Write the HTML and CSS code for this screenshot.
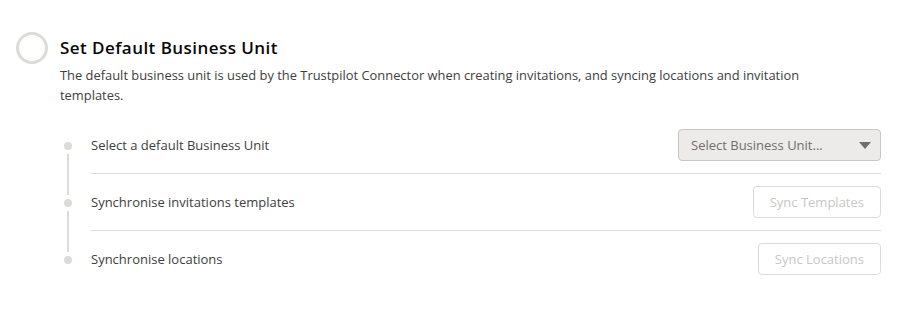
FILE: index.html
```html
<!DOCTYPE html>
<html>
<head>
<meta charset="utf-8">
<link rel="stylesheet" href="styles.css">
</head>
<body>
<div class="step">
  <div class="step-head">
    <span class="step-circle"></span>
    <h2 class="step-title">Set Default Business Unit</h2>
  </div>
  <p class="step-desc">The default business unit is used by the Trustpilot Connector when creating invitations, and syncing locations and invitation templates.</p>
  <ul class="tasks">
    <li class="task">
      <span class="task-dot"></span>
      <div class="task-body">
        <span class="task-label">Select a default Business Unit</span>
        <div class="select">
          <span class="select-text">Select Business Unit...</span>
          <span class="select-caret"></span>
        </div>
      </div>
    </li>
    <li class="task">
      <span class="task-dot"></span>
      <div class="task-body">
        <span class="task-label">Synchronise invitations templates</span>
        <button class="btn" disabled>Sync Templates</button>
      </div>
    </li>
    <li class="task last">
      <span class="task-dot"></span>
      <div class="task-body">
        <span class="task-label">Synchronise locations</span>
        <button class="btn" disabled>Sync Locations</button>
      </div>
    </li>
  </ul>
</div>
</body>
</html>
```

FILE: styles.css
```css
* { box-sizing: border-box; }
html, body { margin: 0; padding: 0; background: #fff; }
body {
  font-family: "Open Sans", "Liberation Sans", sans-serif;
  color: #3e3e3c;
}
.step {
  padding: 32px 16px 0 16px;
  width: 897px;
}
.step-head {
  display: flex;
  align-items: center;
  gap: 12px;
}
.step-circle {
  width: 32px;
  height: 32px;
  border-radius: 50%;
  border: 3px solid #dddbda;
  flex: none;
}
.step-title {
  margin: 0;
  font-size: 17px;
  font-weight: 600;
  letter-spacing: 0.45px;
  color: #080707;
  line-height: 22px;
}
.step-desc {
  margin: 1px 0 0 44px;
  font-size: 12.9px;
  line-height: 20px;
  width: 780px;
  color: #3e3e3c;
}
.tasks {
  list-style: none;
  margin: 25px 0 0 0;
  padding: 0 0 0 48px;
}
.task {
  display: flex;
  position: relative;
  height: 57px;
}
.task-dot {
  width: 8px;
  height: 8px;
  border-radius: 50%;
  background: #dddbda;
  flex: none;
  margin-top: 12px;
}
.task::before {
  content: "";
  position: absolute;
  left: 3px;
  top: 24px;
  width: 2px;
  height: 41px;
  background: #dddbda;
}
.task.last::before { display: none; }
.task-body {
  flex: 1;
  margin-left: 19px;
  display: flex;
  justify-content: space-between;
  align-items: flex-start;
  border-bottom: 1px solid #dddbda;
  height: 44px;
}
.task.last .task-body { border-bottom: none; }
.task-label {
  font-size: 13px;
  line-height: 16px;
  margin-top: 7px;
  color: #3e3e3c;
}
.select {
  width: 203px;
  height: 32px;
  margin-top: -1px;
  background: #ecebea;
  border: 1px solid #c9c7c5;
  border-radius: 4px;
  display: flex;
  align-items: center;
  justify-content: space-between;
  padding: 0 8px 0 12px;
}
.select-text {
  font-size: 13px;
  color: #706e6b;
}
.select-caret {
  width: 0;
  height: 0;
  border-left: 6px solid transparent;
  border-right: 6px solid transparent;
  border-top: 7px solid #706e6b;
  margin-right: 1px;
}
.btn {
  font-family: inherit;
  height: 32px;
  margin-top: -1px;
  padding: 0 16px;
  background: #fff;
  border: 1px solid #dddbda;
  border-radius: 4px;
  font-size: 13px;
  color: #c9c7c5;
}
```
